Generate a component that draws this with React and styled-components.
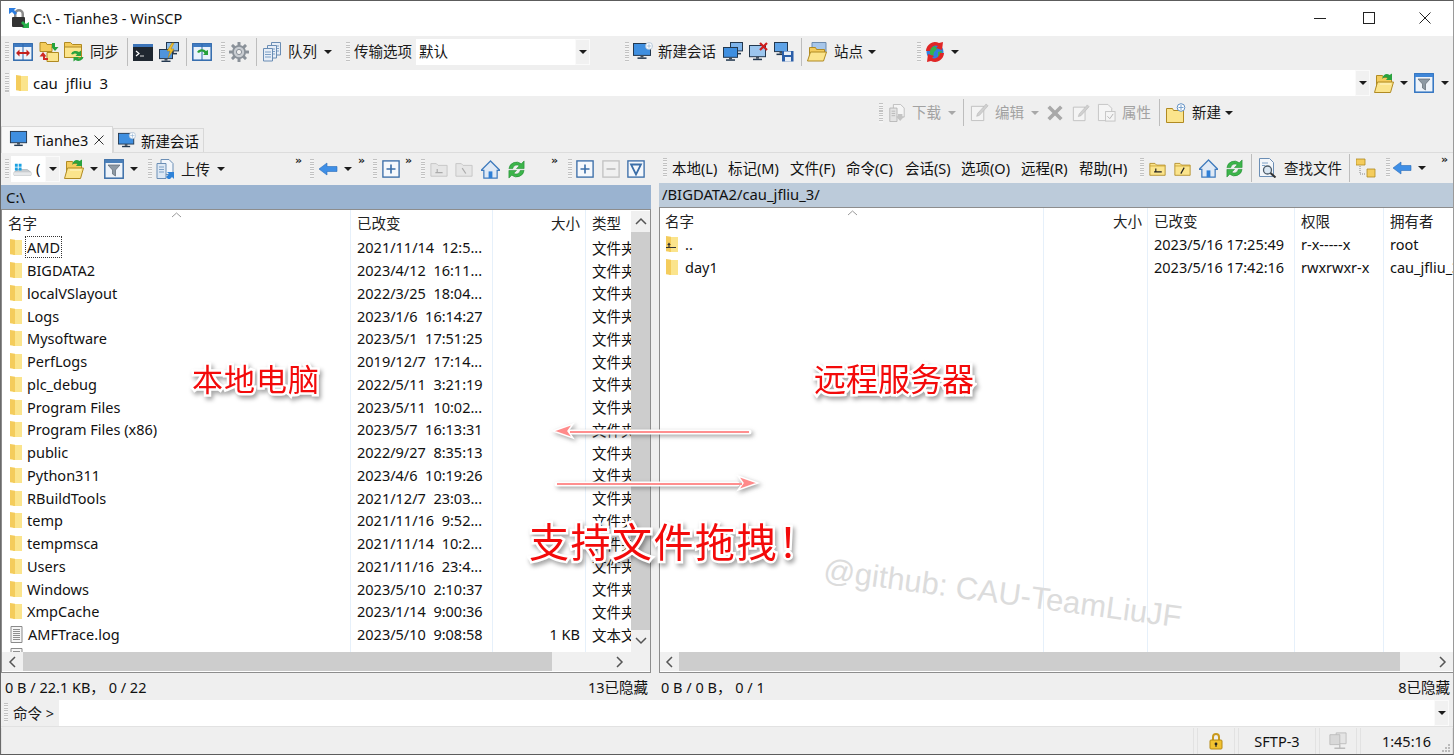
import React from 'react'
import styled, { createGlobalStyle } from 'styled-components'

const GlobalStyle = createGlobalStyle`
  html, body { margin: 0; padding: 0; background: #fff; overflow: hidden; }
  body { font-family: "Noto Sans", "Noto Sans CJK SC", sans-serif; font-size: 14.5px; color: #111; }
`
const at = (p) => `margin-left: ${p.$ml || 0}px;`

const Window = styled.div`
  position: relative;
  width: 1454px;
  height: 755px;
  box-sizing: border-box;
  display: flex;
  flex-direction: column;
  overflow: hidden;
  background: #efefef;
  border-left: 1px solid #6a6a6a;
  border-right: 1px solid #9a9a9a;
  border-top: 1px solid #5c5c5c;
  border-bottom: 1px solid #5c5c5c;
`
const TitleBar = styled.div`
  height: 35px;
  flex: none;
  box-sizing: border-box;
  padding-bottom: 2px;
  display: flex;
  align-items: center;
  background: #fff;
`
const TitleText = styled.span`
  margin-left: 4px;
  font-size: 14.5px;
  white-space: pre;
`
const WinButtons = styled.div`
  margin-left: auto;
  display: flex;
  align-items: center;
`
const Band = styled.div`
  height: ${(p) => p.$h}px;
  flex: none;
  box-sizing: border-box;
  padding: ${(p) => p.$pt || 0}px 0 ${(p) => p.$pb || 0}px;
  display: flex;
  align-items: center;
  background: #efefef;
  white-space: nowrap;
`
const Svg = styled.svg`
  flex: none;
  display: block;
  width: ${(p) => p.$s || 20}px;
  height: ${(p) => p.$s || 20}px;
  ${at}
`
const Grip = styled.span`
  flex: none;
  width: 4px;
  height: 20px;
  ${at}
  background: repeating-linear-gradient(to bottom, #c2c2c2 0 1px, #f4f4f4 1px 2.5px);
`
const Sep = styled.span`
  flex: none;
  width: 1px;
  height: 28px;
  ${at}
  background: #bdbdbd;
`
const Label = styled.span`
  flex: none;
  ${at}
  margin-bottom: 2px;
  color: ${(p) => (p.$off ? '#a2a2a2' : '#1a1a1a')};
`
const Caret = styled.span`
  flex: none;
  width: 0;
  height: 0;
  ${at}
  border-left: 4px solid transparent;
  border-right: 4px solid transparent;
  border-top: 4px solid ${(p) => (p.$off ? '#a8a8a8' : '#1c1c1c')};
`
const More = styled.span`
  flex: none;
  width: 8px;
  ${at}
  margin-top: -17px;
  font-size: 11px;
  line-height: 12px;
  font-weight: 700;
  font-family: "DejaVu Sans", sans-serif;
  color: #222;
`
const Combo = styled.div`
  flex: none;
  display: flex;
  align-items: center;
  height: 26px;
  width: ${(p) => p.$w}px;
  ${at}
  background: #fff;
`
const ComboText = styled.span`
  flex: 1;
  padding-left: ${(p) => p.$pad || 3}px;
  padding-bottom: 2px;
  overflow: hidden;
  white-space: pre;
`
const ComboButton = styled.span`
  flex: none;
  width: 15px;
  height: 26px;
  box-sizing: border-box;
  display: flex;
  align-items: center;
  justify-content: center;
  background: #f1f1f1;
  border: 1px solid #fafafa;
`
const AddressInput = styled.div`
  flex: 1;
  height: 26px;
  display: flex;
  align-items: center;
  background: #fff;
`
const AddressText = styled.span`
  margin-left: 3px;
  white-space: pre;
  font-size: 15px;
`
const TabStrip = styled.div`
  height: 27px;
  flex: none;
  display: flex;
  align-items: flex-end;
  background: #efefef;
  border-bottom: 1px solid #dcdcdc;
  box-sizing: border-box;
`
const Tab = styled.div`
  height: ${(p) => (p.$on ? 27 : 24)}px;
  width: ${(p) => p.$w}px;
  box-sizing: border-box;
  display: flex;
  align-items: center;
  padding-left: ${(p) => p.$pad}px;
  padding-bottom: ${(p) => (p.$on ? 1 : 0)}px;
  gap: ${(p) => p.$gap}px;
  background: ${(p) => (p.$on ? '#f8f8f8' : '#efefef')};
  border: 1px solid #d8d8d8;
  border-bottom: none;
  margin-bottom: ${(p) => (p.$on ? -1 : 0)}px;
  position: relative;
`
const Body = styled.div`
  flex: none;
  height: 520px;
  display: flex;
`
const Pane = styled.div`
  display: flex;
  flex-direction: column;
  min-width: 0;
  width: ${(p) => p.$w}px;
  flex: none;
`
const Splitter = styled.div`
  flex: none;
  width: 8px;
  background: #efefef;
`
const PathBar = styled.div`
  height: 24px;
  flex: none;
  display: flex;
  align-items: center;
  padding: 0 0 ${(p) => p.$pb}px ${(p) => p.$x}px;
  box-sizing: border-box;
  font-size: ${(p) => p.$fs}px;
  background: ${(p) => p.$bg};
  white-space: pre;
`
const ListFrame = styled.div`
  flex: 1;
  min-height: 0;
  display: flex;
  flex-direction: column;
  background: #fff;
  border: 1px solid #8d8d8d;
  border-right: ${(p) => (p.$open ? 'none' : '1px solid #8d8d8d')};
`
const ListMain = styled.div`
  flex: 1;
  min-height: 0;
  display: flex;
  position: relative;
  overflow: hidden;
`
const Column = styled.div`
  flex: ${(p) => (p.$w ? 'none' : '1')};
  width: ${(p) => (p.$w ? `${p.$w}px` : 'auto')};
  min-width: 0;
  box-sizing: border-box;
  overflow: hidden;
  border-right: ${(p) => (p.$last ? 'none' : '1px solid #e6f0fa')};
`
const HeadCell = styled.div`
  height: ${(p) => p.$h}px;
  box-sizing: border-box;
  display: flex;
  align-items: center;
  justify-content: ${(p) => (p.$right ? 'flex-end' : 'flex-start')};
  padding: 0 ${(p) => (p.$right ? 5 : 0)}px ${(p) => p.$pb}px ${(p) => p.$x}px;
  white-space: nowrap;
  color: #222;
`
const Cell = styled.div`
  height: 22.76px;
  display: flex;
  align-items: center;
  justify-content: ${(p) => (p.$right ? 'flex-end' : 'flex-start')};
  padding: 0 ${(p) => (p.$right ? 5 : 0)}px 0 ${(p) => p.$x}px;
  white-space: pre;
  overflow: hidden;
`
const NameText = styled.span`
  margin-left: ${(p) => (p.$focus ? p.$gap - 1 : p.$gap)}px;
  padding: ${(p) => (p.$focus ? '0 1px' : '0')};
  outline: ${(p) => (p.$focus ? '1px dotted #333' : 'none')};
`
const SortMark = styled.svg`
  position: absolute;
  left: ${(p) => p.$x}px;
  top: 2px;
  width: 11px;
  height: 6px;
`
const VScroll = styled.div`
  flex: none;
  width: 19px;
  margin: 1px 0 0 0;
  display: flex;
  flex-direction: column;
  background: #f0f0f0;
`
const ScrollEnd = styled.div`
  flex: none;
  height: ${(p) => p.$h}px;
  display: flex;
  align-items: center;
  justify-content: center;
`
const VThumb = styled.div`
  flex: none;
  height: 398px;
  background: #cdcdcd;
`
const HScroll = styled.div`
  flex: none;
  height: 19px;
  display: flex;
  background: #f0f0f0;
  margin-bottom: 1px;
`
const HEnd = styled.div`
  flex: none;
  width: ${(p) => p.$w}px;
  display: flex;
  align-items: center;
  justify-content: center;
`
const HThumb = styled.div`
  flex: none;
  width: ${(p) => p.$w}px;
  background: #cdcdcd;
`
const HTrack = styled.div`
  flex: 1;
  display: flex;
  align-items: center;
  justify-content: flex-end;
  padding-right: ${(p) => p.$pad}px;
`
const InfoRow = styled.div`
  height: 27px;
  flex: none;
  display: flex;
  background: #efefef;
`
const InfoPart = styled.div`
  flex: none;
  box-sizing: border-box;
  width: ${(p) => p.$w}px;
  padding: 0 ${(p) => p.$r}px 1px ${(p) => p.$l}px;
  display: flex;
  align-items: center;
  justify-content: space-between;
  white-space: pre;
`
const CommandRow = styled.div`
  height: 26px;
  flex: none;
  display: flex;
  align-items: center;
  background: #efefef;
`
const CommandInput = styled.div`
  flex: none;
  width: 1375px;
  height: 26px;
  margin-left: 5px;
  background: #fff;
`
const StatusBar = styled.div`
  flex: 1;
  min-height: 0;
  display: flex;
  align-items: stretch;
  gap: 3px;
  padding: 1px 0 0;
  box-sizing: border-box;
  background: #efefef;
  border-top: 1px solid #e2e2e2;
`
const StatusCell = styled.div`
  box-sizing: border-box;
  width: ${(p) => (p.$w ? `${p.$w}px` : 'auto')};
  flex: ${(p) => (p.$w ? 'none' : '1')};
  display: flex;
  align-items: center;
  justify-content: center;
  border-left: 1px solid #e2e2e2;
  border-right: 1px solid #e2e2e2;
  padding-bottom: 1px;
  position: relative;
`
const ResizeGrip = styled.svg`
  position: absolute;
  right: 1px;
  bottom: 1px;
  width: 10px;
  height: 10px;
`
const Note = styled.div`
  position: absolute;
  left: ${(p) => p.$x}px;
  top: ${(p) => p.$y}px;
  font-size: ${(p) => p.$s}px;
  line-height: 1;
  color: #f30a0a;
  white-space: nowrap;
  font-family: "Noto Sans CJK SC", sans-serif;
  letter-spacing: ${(p) => p.$ls || 0}px;
  -webkit-text-stroke: 5px #fff;
  paint-order: stroke fill;
  filter: drop-shadow(2px 3px 2px rgba(0, 0, 0, 0.35));
`
const Watermark = styled.div`
  position: absolute;
  left: 825px;
  top: 553px;
  font-family: "Liberation Sans", sans-serif;
  font-size: 31px;
  line-height: 1;
  color: #dcdcdc;
  white-space: nowrap;
  transform: rotate(7.6deg);
  transform-origin: 0 0;
`
const ArrowLayer = styled.svg`
  position: absolute;
  left: ${(p) => p.$x}px;
  top: ${(p) => p.$y}px;
  width: 220px;
  height: 24px;
  filter: drop-shadow(2px 2px 2px rgba(90, 90, 90, 0.55));
`

// --- icons ---
const F = { light: '#fbe48c', mid: '#f4cc5c', line: '#b08a22' }

const AppIcon = () => (
  <Svg $s={20} $ml={8} viewBox="0 0 20 20">
    <path d="M5 9V6a5 5 0 0 1 10 0v3h-2.500V6a2.500 2.500 0 0 0-5 0v3z" fill="#8b8b8b" />
    <rect x="3" y="9" width="13" height="10" rx="1" fill="#333" />
    <path d="M0 0h7L5 2l3 3-2 2-3-3-3 2z" fill="#2b7de0" />
    <path d="M20 20h-7l2-2-3-3 2-2 3 3 3-2z" fill="#27b04a" />
  </Svg>
)
const MiniFolder = ({ ml }) => (
  <Svg $s={16} $ml={ml} viewBox="0 0 12 16">
    <path d="M3 1h9v15H3z" fill={F.light} />
    <path d="M0 0l5 .8V16l-5-.8z" fill={F.mid} />
  </Svg>
)
const UpFolder = () => (
  <Svg $s={16} viewBox="0 0 12 16">
    <path d="M3 1h9v15H3z" fill={F.light} />
    <path d="M0 0l5 .8V16l-5-.8z" fill={F.mid} />
    <path d="M0 11.500h10M3 8v3.500" stroke="#333" strokeWidth="1.200" fill="none" />
    <path d="M1.200 9L3 6.500 4.800 9z" fill="#333" />
  </Svg>
)
const LogIcon = () => (
  <Svg $s={17} viewBox="0 0 14 17">
    <path d="M1.500 .5h11v16h-11z" fill="#f6f6f6" stroke="#8a8a8a" />
    <path d="M3.500 3.500h7M3.500 5.500h7M3.500 7.500h7M3.500 9.500h7M3.500 11.500h7M3.500 13.500h7" stroke="#8f8f8f" />
  </Svg>
)
const CompareIcon = (p) => (
  <Svg {...p} viewBox="0 0 20 20">
    <rect x=".8" y="1.800" width="18.400" height="16.400" fill="#eef4fb" stroke="#2f68ac" strokeWidth="1.500" />
    <path d="M1 2h18v3H1z" fill="#3f7bc2" />
    <path d="M10 2v16" stroke="#2f68ac" />
    <path d="M4 11h12" stroke="#c4201c" strokeWidth="2" />
    <path d="M6.500 7.500L3 11l3.500 3.500zM13.500 7.500L17 11l-3.500 3.500z" fill="#c4201c" />
  </Svg>
)
const FoldersRedIcon = (p) => (
  <Svg {...p} viewBox="0 0 20 20">
    <path d="M1 .5h6l1 2h5v7H1z" fill={F.mid} stroke={F.line} />
    <path d="M8 10.500h11.500v9H8z" fill={F.light} stroke={F.line} />
    <path d="M13 1h3v4h3.500L16 9l-3.500-4h.5z" fill="#24a23c" />
    <path d="M9 18H4v-3.500H.5L4 10l3.500 4.500H6V16h3z" fill="#d02a22" />
  </Svg>
)
const FolderGreenIcon = (p) => (
  <Svg {...p} viewBox="0 0 20 20">
    <path d="M.5 15.500V.5h6l2 2h9v13z" fill={F.mid} stroke={F.line} />
    <path d="M.5 15.500V5h17v10.500z" fill={F.light} stroke={F.line} />
    <path d="M7 12a5 4.500 0 0 1 8-2l2-1.500V14h-5.500l1.500-1.500a2.500 2.500 0 0 0-4 0z" fill="#2aa23e" />
    <path d="M19.500 15a5 4.500 0 0 1-8 3l-2 1.500V15H15l-1 1a2.500 2.500 0 0 0 3-1z" fill="#2aa23e" />
  </Svg>
)
const TerminalIcon = (p) => (
  <Svg {...p} viewBox="0 0 20 20">
    <rect x="0" y="2" width="20" height="17" fill="#1f2730" />
    <rect x="0" y="2" width="20" height="3" fill="#3c74b8" />
    <path d="M3 9l3 2.500L3 14" stroke="#fff" strokeWidth="1.200" fill="none" />
    <path d="M7 14h4" stroke="#ddd" />
  </Svg>
)
const Monitor = ({ x = 0, y = 0, w = 14, c = '#6fb0ee' }) => (
  <g transform={`translate(${x} ${y})`}>
    <rect x=".5" y=".5" width={w} height={w * 0.7} fill={c} stroke="#23384f" />
    <rect x={w / 2 - 1} y={w * 0.7 + 0.5} width="3" height="2" fill="#44505c" />
    <rect x={w / 2 - 4} y={w * 0.7 + 2.5} width="9" height="1.500" fill="#23384f" />
  </g>
)
const PuttyIcon = (p) => (
  <Svg {...p} viewBox="0 0 20 20">
    <Monitor x={7} y={0} w={12} c="#8dbdea" />
    <Monitor x={0} y={7} w={13} c="#4f94dc" />
    <path d="M13 1l-5 8h3l-2 7 6-9h-3l3-6z" fill="#f2c02c" stroke="#a67c10" strokeWidth=".5" />
  </Svg>
)
const SyncBoxIcon = (p) => (
  <Svg {...p} viewBox="0 0 20 20">
    <rect x=".8" y="1.800" width="18.400" height="16.400" fill="#eaf2fb" stroke="#2f68ac" strokeWidth="1.500" />
    <path d="M1 2h18v3H1z" fill="#3f7bc2" />
    <path d="M10 2v16" stroke="#2f68ac" />
    <path d="M5 10a5 4 0 0 1 9-1l2-1v5h-5l1.500-1.500A3 3 0 0 0 7 11z" fill="#27a03a" />
  </Svg>
)
const GearIcon = (p) => (
  <Svg {...p} viewBox="0 0 20 20">
    <g fill="#8a9199">
      <circle cx="10" cy="10" r="7" />
      {[0, 45, 90, 135, 180, 225, 270, 315].map((a) => (
        <rect key={a} x="8.500" y="0" width="3" height="4" rx=".5" transform={`rotate(${a} 10 10)`} />
      ))}
    </g>
    <circle cx="10" cy="10" r="5.200" fill="#c9cdd2" />
    <circle cx="10" cy="10" r="2.600" fill="#f0f0f0" stroke="#8a9199" />
  </Svg>
)
const QueueIcon = (p) => (
  <Svg {...p} viewBox="0 0 20 20">
    {[[9, 0], [5, 3], [1, 6]].map(([x, y]) => (
      <g key={x}>
        <path d={`M${x + 0.5} ${y + 0.5}h9v12.500h-9z`} fill="#e7eef7" stroke="#6a8db4" />
        <path d={`M${x + 2} ${y + 4}h6M${x + 2} ${y + 6.500}h6M${x + 2} ${y + 9}h6`} stroke="#7da0c6" />
      </g>
    ))}
  </Svg>
)
const NewSessionIcon = (p) => (
  <Svg {...p} viewBox="0 0 20 20">
    <Monitor x={0} y={1} w={17} c="#3f8fe0" />
    <circle cx="16" cy="4" r="3.500" fill="#fff" stroke="#9fb7d0" strokeWidth=".7" />
    <path d="M16 1.500v5M13.500 4h5" stroke="#8fb0d0" strokeWidth=".7" />
  </Svg>
)
const TabMonitorIcon = () => (
  <Svg $s={19} viewBox="0 0 20 20">
    <Monitor x={1} y={1} w={17} c="#3f8fe0" />
  </Svg>
)
const TwoMonitorsIcon = (p) => (
  <Svg {...p} viewBox="0 0 20 20">
    <Monitor x={7} y={0} w={12} c="#7fb4ea" />
    <Monitor x={0} y={5} w={14} c="#3f8fe0" />
  </Svg>
)
const CloseMonitorIcon = (p) => (
  <Svg {...p} viewBox="0 0 20 20">
    <Monitor x={0} y={3} w={16} c="#9cc6ee" />
    <path d="M11 1l7 7M18 1l-7 7" stroke="#cf1d1d" strokeWidth="2.200" />
  </Svg>
)
const SaveSessionIcon = (p) => (
  <Svg {...p} viewBox="0 0 20 20">
    <Monitor x={0} y={0} w={13} c="#5da2e6" />
    <rect x="8" y="9" width="11.500" height="10.500" fill="#2a5ea8" />
    <rect x="10" y="9.500" width="7" height="3.500" fill="#e8eef6" />
    <rect x="11" y="15" width="6" height="4.500" fill="#e8eef6" />
  </Svg>
)
const OpenFolderIcon = ({ arrow, ...p }) => (
  <Svg {...p} viewBox="0 0 20 20">
    <path d="M2.500 18V2.500h6l1 2h8v5" fill={F.mid} stroke={F.line} />
    <path d="M.5 19.500l3-10.500h16l-3 10.500z" fill={F.light} stroke={F.line} />
    <path d="M6 11h11" stroke="#fff6c8" />
    {arrow && <path d="M8 6c1-5 5-6 7.500-4L18 .5V7h-6l1.500-2C12 3.500 10 4 8 6z" fill="#2aa23e" />}
  </Svg>
)
const SitesIcon = (p) => (
  <Svg {...p} viewBox="0 0 20 20">
    <path d="M5 .5h14v10H5z" fill="#a6c6ea" stroke="#6d8bad" />
    <path d="M2.500 18V5.500h6l1 2h8v3" fill={F.mid} stroke={F.line} />
    <path d="M.5 19l3-9h16l-3 9z" fill={F.light} stroke={F.line} />
  </Svg>
)
const GlobeIcon = (p) => (
  <Svg {...p} viewBox="0 0 20 20">
    <circle cx="10" cy="10" r="8.500" fill="#2f7fe0" />
    <path d="M5 6l5-2 2 3-3 3-1 5-3-3zM13 10l4-1-1 5-3 2z" fill="#35b24a" />
    <path d="M1 9a9 9 0 0 1 13-8l4-1-1 8-6-2 2-2a6 6 0 0 0-8 5z" fill="#e02626" />
    <path d="M19 11a9 9 0 0 1-13 8l-4 1 1-8 6 2-2 2a6 6 0 0 0 8-5z" fill="#e02626" />
  </Svg>
)
const FilterIcon = ({ strong, ...p }) => (
  <Svg {...p} viewBox="0 0 20 20">
    <rect x=".8" y=".8" width="18.400" height="18.400" fill="#eef3f9" stroke={strong ? '#2f72c0' : '#3b6ea8'} strokeWidth="1.500" />
    <path d="M1 1h18v3H1z" fill={strong ? '#3f86d8' : '#4a7fb8'} />
    <path d="M4 6h12l-4.500 5v6l-3-2v-4z" fill="#8d99a4" stroke="#5e6972" strokeWidth=".7" />
  </Svg>
)
const DownloadOff = (p) => (
  <Svg {...p} viewBox="0 0 20 20">
    <path d="M6 .5h8l4 4v10H6z" fill="#f5f5f5" stroke="#bbb" />
    <path d="M2 4.500h8v15H2z" fill="#e4e4e4" stroke="#b4b4b4" />
    <path d="M4 8h4M4 10.500h4M4 13h4" stroke="#b4b4b4" />
    <path d="M11 11h5v3h2l-4.500 5L9 14h2z" fill="#c4c4c4" />
  </Svg>
)
const EditOff = (p) => (
  <Svg {...p} viewBox="0 0 20 20">
    <path d="M1.500 3.500h13v15h-13z" fill="#f4f4f4" stroke="#c0c0c0" />
    <path d="M17 1l2 2-9 10-3 1 1-3z" fill="#d0d0d0" stroke="#b4b4b4" strokeWidth=".6" />
  </Svg>
)
const DeleteOff = (p) => (
  <Svg {...p} viewBox="0 0 20 20">
    <path d="M3 3l14 14M17 3L3 17" stroke="#a9a9a9" strokeWidth="4" />
  </Svg>
)
const PropsOff = (p) => (
  <Svg {...p} viewBox="0 0 20 20">
    <path d="M1.500 1.500h10l4 4v13h-14z" fill="#f5f5f5" stroke="#c4c4c4" />
    <rect x="9" y="9" width="10" height="10" fill="#f5f5f5" stroke="#c4c4c4" />
    <path d="M11 14l2.500 2.500L17 11.500" stroke="#b4b4b4" fill="none" />
  </Svg>
)
const NewFolderIcon = (p) => (
  <Svg {...p} viewBox="0 0 20 20">
    <path d="M.5 19.500V5.500h6l1 2h10v12z" fill={F.light} stroke={F.line} />
    <circle cx="15" cy="4.500" r="3.800" fill="#fff" stroke="#5f8fc4" />
    <path d="M15 2v5M12.500 4.500h5" stroke="#7aa3cf" />
  </Svg>
)
const DriveIcon = (p) => (
  <Svg {...p} viewBox="0 0 20 20">
    <path d="M1 13l4-3h10l4 3v3H1z" fill="#c8ccd0" stroke="#a0a4a8" strokeWidth=".6" />
    <path d="M1 13h18v3H1z" fill="#e6e8ea" />
    <path d="M2 4h3v3H2zM6 4h3v3H6zM2 8h3v3H2zM6 8h3v3H6z" fill="#1ba1e2" />
  </Svg>
)
const UploadIcon = (p) => (
  <Svg {...p} viewBox="0 0 20 20">
    <path d="M5 .5h8l4 4v11H5z" fill="#f2f6fb" stroke="#6b8eb5" />
    <path d="M1 4.500h9v15H1z" fill="#dde8f4" stroke="#6b8eb5" />
    <path d="M3 8h5M3 10.500h5M3 13h5" stroke="#7da0c6" />
    <path d="M10 18l3-3-2-2h7v7l-2-2-3 3z" fill="#2e82d8" />
  </Svg>
)
const BackIcon = (p) => (
  <Svg {...p} viewBox="0 0 20 20">
    <path d="M1 10l8-6v3.500h10v5H9V16z" fill="#3f8fe6" stroke="#2a6bb8" strokeWidth=".6" />
  </Svg>
)
const BoxGlyph = ({ glyph, off, ...p }) => (
  <Svg {...p} viewBox="0 0 20 20">
    <rect x="1" y="1" width="18" height="18" fill={off ? '#f0f0f0' : '#f5f8fc'} stroke={off ? '#c2c2c2' : '#3b6ea8'} strokeWidth="1.500" />
    {glyph === 'plus' && <path d="M10 5v10M5 10h10" stroke="#3b6ea8" strokeWidth="1.800" />}
    {glyph === 'minus' && <path d="M5 10h10" stroke="#bdbdbd" strokeWidth="1.800" />}
    {glyph === 'down' && <path d="M4.500 5h11L10 16z" fill="none" stroke="#3b6ea8" strokeWidth="2" />}
  </Svg>
)
const GrayFolder = ({ slash, ...p }) => (
  <Svg {...p} viewBox="0 0 20 20">
    <path d="M1 18V4h6l2 2h10v12z" fill="#e6e6e6" stroke="#c4c4c4" />
    {slash ? <path d="M8 9l4 6" stroke="#aaa" strokeWidth="1.300" /> : <path d="M6 14h8M8 10v4" stroke="#aaa" strokeWidth="1.300" />}
  </Svg>
)
const DirIcon = ({ slash, ...p }) => (
  <Svg {...p} viewBox="0 0 20 20">
    <path d="M1 18V4h6l2 2h10v12z" fill={F.light} stroke={F.line} />
    <path d="M1 7h18" stroke="#c9a030" />
    {slash ? <path d="M12 9l-4 7" stroke="#222" strokeWidth="1.400" /> : <path d="M6 14h9M8 10v4" stroke="#222" strokeWidth="1.400" />}
  </Svg>
)
const HomeIcon = (p) => (
  <Svg {...p} viewBox="0 0 20 20">
    <path d="M10 1L0 11h3v8h14v-8h3z" fill="#dfe9f5" stroke="#3f7bbd" strokeWidth="1.300" />
    <rect x="8" y="12" width="4" height="7" fill="#2f7fd6" />
  </Svg>
)
const RefreshIcon = (p) => (
  <Svg {...p} viewBox="0 0 20 20">
    <path d="M2 9a8 8 0 0 1 13-5l3-3v8h-8l3-3a4.500 4.500 0 0 0-7 3z" fill="#3cb54a" stroke="#1f8a30" strokeWidth=".6" />
    <path d="M18 11a8 8 0 0 1-13 5l-3 3v-8h8l-3 3a4.500 4.500 0 0 0 7-3z" fill="#3cb54a" stroke="#1f8a30" strokeWidth=".6" />
  </Svg>
)
const FindIcon = (p) => (
  <Svg {...p} viewBox="0 0 20 20">
    <path d="M1.500 .5h10l4 4v14h-14z" fill="#f3f6fa" stroke="#6b8eb5" />
    <path d="M4 5h6M4 7.500h3" stroke="#7da0c6" />
    <circle cx="9.500" cy="12" r="4" fill="#dbe7f2" stroke="#4c5b68" strokeWidth="1.300" />
    <path d="M12.500 15l5 4.500" stroke="#333" strokeWidth="2" />
  </Svg>
)
const TreeIcon = (p) => (
  <Svg {...p} viewBox="0 0 20 20">
    <path d="M0 1h9v6H0z" fill={F.mid} stroke={F.line} strokeWidth=".8" />
    <path d="M4 8v8h6" stroke="#888" strokeDasharray="1 1" fill="none" />
    <path d="M11 11h8v8h-8z" fill={F.mid} stroke={F.line} strokeWidth=".8" />
  </Svg>
)
const LockIcon = () => (
  <Svg $s={18} viewBox="0 0 16 18">
    <path d="M4 8V5a4 4 0 0 1 8 0v3h-2V5a2 2 0 0 0-4 0v3z" fill="#c99a1e" />
    <rect x="2" y="8" width="12" height="9" rx="1" fill="#f2c230" stroke="#b78a14" />
    <circle cx="8" cy="12" r="1.400" fill="#222" />
    <path d="M7.500 12h1v3h-1z" fill="#222" />
  </Svg>
)
const NetOffIcon = () => (
  <Svg $s={18} viewBox="0 0 20 20">
    <path d="M8 1h11v12H8z" fill="#e4e4e4" stroke="#bcbcbc" />
    <path d="M1 3h11v11H1z" fill="#d8d8d8" stroke="#bcbcbc" />
    <path d="M12 14v4M6 18h12" stroke="#bcbcbc" strokeWidth="1.500" />
  </Svg>
)
const Chevron = ({ dir }) => {
  const d = { up: 'M1 7l5-5 5 5', down: 'M1 2l5 5 5-5', left: 'M7 1L2 6l5 5', right: 'M2 1l5 5-5 5' }[dir]
  const tall = dir === 'up' || dir === 'down'
  return (
    <svg width={tall ? 12 : 9} height={tall ? 9 : 12} viewBox={tall ? '0 0 12 9' : '0 0 9 12'}>
      <path d={d} fill="none" stroke="#555" strokeWidth="1.500" />
    </svg>
  )
}

const TOOL_MENU = [
  ['本地(L)', 56],
  ['标记(M)', 62],
  ['文件(F)', 56],
  ['命令(C)', 59],
  ['会话(S)', 56],
  ['选项(O)', 60],
  ['远程(R)', 58],
  ['帮助(H)', 61],
]
const MenuItem = styled.span`
  flex: none;
  width: ${(p) => p.$w}px;
  margin-bottom: 2px;
`
const MenuRow = styled.div`
  display: flex;
  margin-left: 5px;
`

const LOCAL = [
  ['AMD', '2021/11/14  12:5...', '', '文件夹'],
  ['BIGDATA2', '2023/4/12  16:11...', '', '文件夹'],
  ['localVSlayout', '2022/3/25  18:04...', '', '文件夹'],
  ['Logs', '2023/1/6  16:14:27', '', '文件夹'],
  ['Mysoftware', '2023/5/1  17:51:25', '', '文件夹'],
  ['PerfLogs', '2019/12/7  17:14...', '', '文件夹'],
  ['plc_debug', '2022/5/11  3:21:19', '', '文件夹'],
  ['Program Files', '2023/5/11  10:02...', '', '文件夹'],
  ['Program Files (x86)', '2023/5/7  16:13:31', '', '文件夹'],
  ['public', '2022/9/27  8:35:13', '', '文件夹'],
  ['Python311', '2023/4/6  10:19:26', '', '文件夹'],
  ['RBuildTools', '2021/12/7  23:03...', '', '文件夹'],
  ['temp', '2021/11/16  9:52...', '', '文件夹'],
  ['tempmsca', '2021/11/14  10:2...', '', '文件夹'],
  ['Users', '2021/11/16  23:4...', '', '文件夹'],
  ['Windows', '2023/5/10  2:10:37', '', '文件夹'],
  ['XmpCache', '2023/1/14  9:00:36', '', '文件夹'],
  ['AMFTrace.log', '2023/5/10  9:08:58', '1 KB', '文本文档'],
  ['', '', '', ''],
]

const REMOTE = [
  ['..', '', '2023/5/16 17:25:49', 'r-x-----x', 'root'],
  ['day1', '', '2023/5/16 17:42:16', 'rwxrwxr-x', 'cau_jfliu_3'],
]

const rowIcon = (name) => {
  if (name === '..') return <UpFolder />
  if (name.endsWith('.log') || name === '') return <LogIcon />
  return <MiniFolder />
}

function NameColumn({ rows, width, headH, headPb, headX, iconX, gap }) {
  return (
    <Column $w={width}>
      <HeadCell $h={headH} $pb={headPb} $x={headX}>名字</HeadCell>
      {rows.map((r, i) => (
        <Cell key={i} $x={iconX}>
          {rowIcon(r[0])}
          <NameText $gap={gap} $focus={r[0] === 'AMD'}>{r[0]}</NameText>
        </Cell>
      ))}
    </Column>
  )
}

function TextColumn({ title, rows, idx, width, headH, headPb, x, right, last }) {
  return (
    <Column $w={width} $last={last}>
      <HeadCell $h={headH} $pb={headPb} $x={x} $right={right}>{title}</HeadCell>
      {rows.map((r, i) => (
        <Cell key={i} $x={x} $right={right}>{r[idx]}</Cell>
      ))}
    </Column>
  )
}

export default function App() {
  const leftHead = { headH: 26, headPb: 2 }
  const rightHead = { headH: 25, headPb: 1 }
  return (
    <>
      <GlobalStyle />
      <Window>
        <TitleBar>
          <AppIcon />
          <TitleText>C:\ - Tianhe3 - WinSCP</TitleText>
          <WinButtons>
            <Svg $s={14} viewBox="0 0 14 14"><path d="M1 7.500h12" stroke="#222" /></Svg>
            <Svg $s={14} $ml={35} viewBox="0 0 14 14"><rect x="1.500" y="1.500" width="11" height="11" fill="none" stroke="#222" /></Svg>
            <Svg $s={14} $ml={42} viewBox="0 0 14 14"><path d="M1.500 1.500l11 11M12.500 1.500l-11 11" stroke="#222" /></Svg>
            <Svg $s={14} $ml={7} viewBox="0 0 14 14" />
          </WinButtons>
        </TitleBar>

        <Band $h={34} $pb={3}>
          <Grip $ml={4} />
          <CompareIcon $ml={4} />
          <FoldersRedIcon $ml={6} />
          <FolderGreenIcon $ml={5} />
          <Label $ml={6}>同步</Label>
          <Sep $ml={8} />
          <TerminalIcon $ml={5} />
          <PuttyIcon $ml={6} />
          <Sep $ml={7} />
          <SyncBoxIcon $ml={5} />
          <Grip $ml={9} />
          <GearIcon $ml={4} />
          <Sep $ml={7} />
          <QueueIcon $ml={5} />
          <Label $ml={6}>队列</Label>
          <Caret $ml={7} />
          <Grip $ml={14} />
          <Label $ml={4}>传输选项</Label>
          <Combo $w={174} $ml={4}>
            <ComboText>默认</ComboText>
            <ComboButton><Caret /></ComboButton>
          </Combo>
          <Grip $ml={35} />
          <NewSessionIcon $ml={4} />
          <Label $ml={5}>新建会话</Label>
          <TwoMonitorsIcon $ml={7} />
          <CloseMonitorIcon $ml={6} />
          <SaveSessionIcon $ml={5} />
          <Sep $ml={7} />
          <SitesIcon $ml={5} />
          <Label $ml={7}>站点</Label>
          <Caret $ml={5} />
          <Grip $ml={41} />
          <GlobeIcon $ml={4} />
          <Caret $ml={6} />
        </Band>

        <Band $h={26}>
          <Grip $ml={4} />
          <Combo $w={1360} $ml={1}>
            <AddressInput>
              <MiniFolder ml={4} />
              <AddressText>cau  jfliu  3</AddressText>
            </AddressInput>
            <ComboButton><Caret /></ComboButton>
          </Combo>
          <OpenFolderIcon $ml={4} arrow />
          <Caret $ml={6} />
          <FilterIcon strong $ml={6} />
          <Caret $ml={7} />
        </Band>

        <Band $h={30} $pt={3}>
          <Grip $ml={878} />
          <DownloadOff $s={18} $ml={5} />
          <Label $off $ml={6}>下载</Label>
          <Caret $off $ml={7} />
          <Sep $ml={7} />
          <EditOff $s={19} $ml={6} />
          <Label $off $ml={6}>编辑</Label>
          <Caret $off $ml={7} />
          <DeleteOff $s={18} $ml={7} />
          <EditOff $s={18} $ml={8} />
          <PropsOff $s={19} $ml={7} />
          <Label $off $ml={6}>属性</Label>
          <Sep $ml={8} />
          <NewFolderIcon $ml={6} />
          <Label $ml={6}>新建</Label>
          <Caret $ml={4} />
        </Band>

        <TabStrip>
          <Tab $on $w={112} $pad={7} $gap={6}>
            <TabMonitorIcon />
            <span>Tianhe3</span>
            <Svg $s={12} $ml={-1} viewBox="0 0 12 12"><path d="M1.500 1.500l9 9M10.500 1.500l-9 9" stroke="#333" /></Svg>
          </Tab>
          <Tab $w={91} $pad={4} $gap={5}>
            <NewSessionIcon $s={18} />
            <span>新建会话</span>
          </Tab>
        </TabStrip>

        <Body>
          <Pane $w={650}>
            <Band $h={32}>
              <Grip $ml={4} />
              <Combo $w={49} $ml={2}>
                <DriveIcon $s={19} $ml={2} />
                <ComboText $pad={4}>(</ComboText>
                <ComboButton><Caret /></ComboButton>
              </Combo>
              <OpenFolderIcon $ml={4} arrow />
              <Caret $ml={6} />
              <FilterIcon $ml={6} />
              <Caret $ml={6} />
              <Grip $ml={10} />
              <UploadIcon $ml={4} />
              <Label $ml={5}>上传</Label>
              <Caret $ml={7} />
              <More $ml={70}>»</More>
              <Grip $ml={7} />
              <BackIcon $ml={4} />
              <Caret $ml={6} />
              <More $ml={6}>»</More>
              <Grip $ml={7} />
              <BoxGlyph glyph="plus" $s={18} $ml={5} />
              <More $ml={5}>»</More>
              <Grip $ml={8} />
              <GrayFolder $s={18} $ml={5} />
              <GrayFolder slash $s={18} $ml={7} />
              <HomeIcon $s={19} $ml={8} />
              <RefreshIcon $s={19} $ml={7} />
              <More $ml={25}>»</More>
              <Grip $ml={9} />
              <BoxGlyph glyph="plus" $s={18} $ml={4} />
              <BoxGlyph off glyph="minus" $s={18} $ml={8} />
              <BoxGlyph glyph="down" $s={18} $ml={7} />
            </Band>
            <PathBar $bg="#9ab3d0" $x={5} $pb={0} $fs={15}>C:\</PathBar>
            <ListFrame>
              <ListMain>
                <SortMark $x={169} viewBox="0 0 11 6"><path d="M1 5l4.500-4L10 5" fill="none" stroke="#999" /></SortMark>
                <NameColumn rows={LOCAL} width={349} {...leftHead} headX={6} iconX={6} gap={3} />
                <TextColumn title="已改变" rows={LOCAL} idx={1} width={142} {...leftHead} x={6} />
                <TextColumn title="大小" rows={LOCAL} idx={2} width={93} {...leftHead} x={0} right />
                <TextColumn title="类型" rows={LOCAL} idx={3} {...leftHead} x={6} last />
                <VScroll>
                  <ScrollEnd $h={21}><Chevron dir="up" /></ScrollEnd>
                  <VThumb />
                  <ScrollEnd $h={21}><Chevron dir="down" /></ScrollEnd>
                </VScroll>
              </ListMain>
              <HScroll>
                <HEnd $w={21}><Chevron dir="left" /></HEnd>
                <HThumb $w={529} />
                <HTrack $pad={26}><Chevron dir="right" /></HTrack>
              </HScroll>
            </ListFrame>
          </Pane>
          <Splitter />
          <Pane $w={794}>
            <Band $h={30}>
              <Grip $ml={4} />
              <MenuRow>
                {TOOL_MENU.map(([t, w]) => (
                  <MenuItem key={t} $w={w}>{t}</MenuItem>
                ))}
              </MenuRow>
              <Grip />
              <DirIcon $s={17} $ml={5} />
              <DirIcon slash $s={17} $ml={8} />
              <HomeIcon $s={19} $ml={8} />
              <RefreshIcon $s={19} $ml={7} />
              <Sep $ml={7} />
              <FindIcon $ml={6} />
              <Label $ml={6}>查找文件</Label>
              <Sep $ml={7} />
              <TreeIcon $ml={6} />
              <Grip $ml={10} />
              <BackIcon $ml={2} />
              <Caret $ml={6} />
              <More $ml={15}>»</More>
            </Band>
            <PathBar $bg="#bccbda" $x={3} $pb={2} $fs={14.800}>/BIGDATA2/cau_jfliu_3/</PathBar>
            <ListFrame $open>
              <ListMain>
                <SortMark $x={187} viewBox="0 0 11 6"><path d="M1 5l4.500-4L10 5" fill="none" stroke="#999" /></SortMark>
                <NameColumn rows={REMOTE} width={384} {...rightHead} headX={5} iconX={4} gap={5} />
                <TextColumn title="大小" rows={REMOTE} idx={1} width={104} {...rightHead} x={0} right />
                <TextColumn title="已改变" rows={REMOTE} idx={2} width={147} {...rightHead} x={6} />
                <TextColumn title="权限" rows={REMOTE} idx={3} width={89} {...rightHead} x={6} />
                <TextColumn title="拥有者" rows={REMOTE} idx={4} {...rightHead} x={6} last />
              </ListMain>
              <HScroll>
                <HEnd $w={19}><Chevron dir="left" /></HEnd>
                <HThumb $w={721} />
                <HTrack $pad={6}><Chevron dir="right" /></HTrack>
              </HScroll>
            </ListFrame>
          </Pane>
        </Body>

        <InfoRow>
          <InfoPart $w={650} $l={4} $r={3}>
            <span>0 B / 22.1 KB， 0 / 22</span>
            <span>13已隐藏</span>
          </InfoPart>
          <InfoPart $w={802} $l={10} $r={3}>
            <span>0 B / 0 B， 0 / 1</span>
            <span>8已隐藏</span>
          </InfoPart>
        </InfoRow>

        <CommandRow>
          <Grip $ml={3} />
          <Label $ml={5}>命令 &gt;</Label>
          <CommandInput />
          <ComboButton><Caret /></ComboButton>
        </CommandRow>

        <StatusBar>
          <StatusCell />
          <StatusCell $w={38}><LockIcon /></StatusCell>
          <StatusCell $w={78}>SFTP-3</StatusCell>
          <StatusCell $w={38}><NetOffIcon /></StatusCell>
          <StatusCell $w={93}>
            1:45:16
            <ResizeGrip viewBox="0 0 10 10">
              <path d="M7 1h2v2H7zM4 4h2v2H4zM7 4h2v2H7zM1 7h2v2H1zM4 7h2v2H4zM7 7h2v2H7z" fill="#bbb" />
            </ResizeGrip>
          </StatusCell>
        </StatusBar>

        <Note $x={191} $y={361} $s={31} $ls={1}>本地电脑</Note>
        <Note $x={813} $y={360} $s={32}>远程服务器</Note>
        <Note $x={528} $y={519} $s={40} $ls={1.500}>支持文件拖拽！</Note>
        <Watermark>@github: CAU-TeamLiuJF</Watermark>

        <ArrowLayer $x={545} $y={418} viewBox="0 0 220 24">
          <path d="M203 13H24" stroke="#fff" strokeWidth="5" strokeLinecap="round" />
          <path d="M7 12l20-7-5 7 5 7z" fill="#ff8a8a" stroke="#fff" strokeWidth="1.500" />
          <path d="M203 13H24" stroke="#ff8f8f" strokeWidth="2" />
        </ArrowLayer>
        <ArrowLayer $x={545} $y={470} viewBox="0 0 220 24">
          <path d="M11 13h180" stroke="#fff" strokeWidth="5" strokeLinecap="round" />
          <path d="M212 12l-20-7 5 7-5 7z" fill="#ff8a8a" stroke="#fff" strokeWidth="1.500" />
          <path d="M11 13h185" stroke="#ff8f8f" strokeWidth="2" />
        </ArrowLayer>
      </Window>
    </>
  )
}
